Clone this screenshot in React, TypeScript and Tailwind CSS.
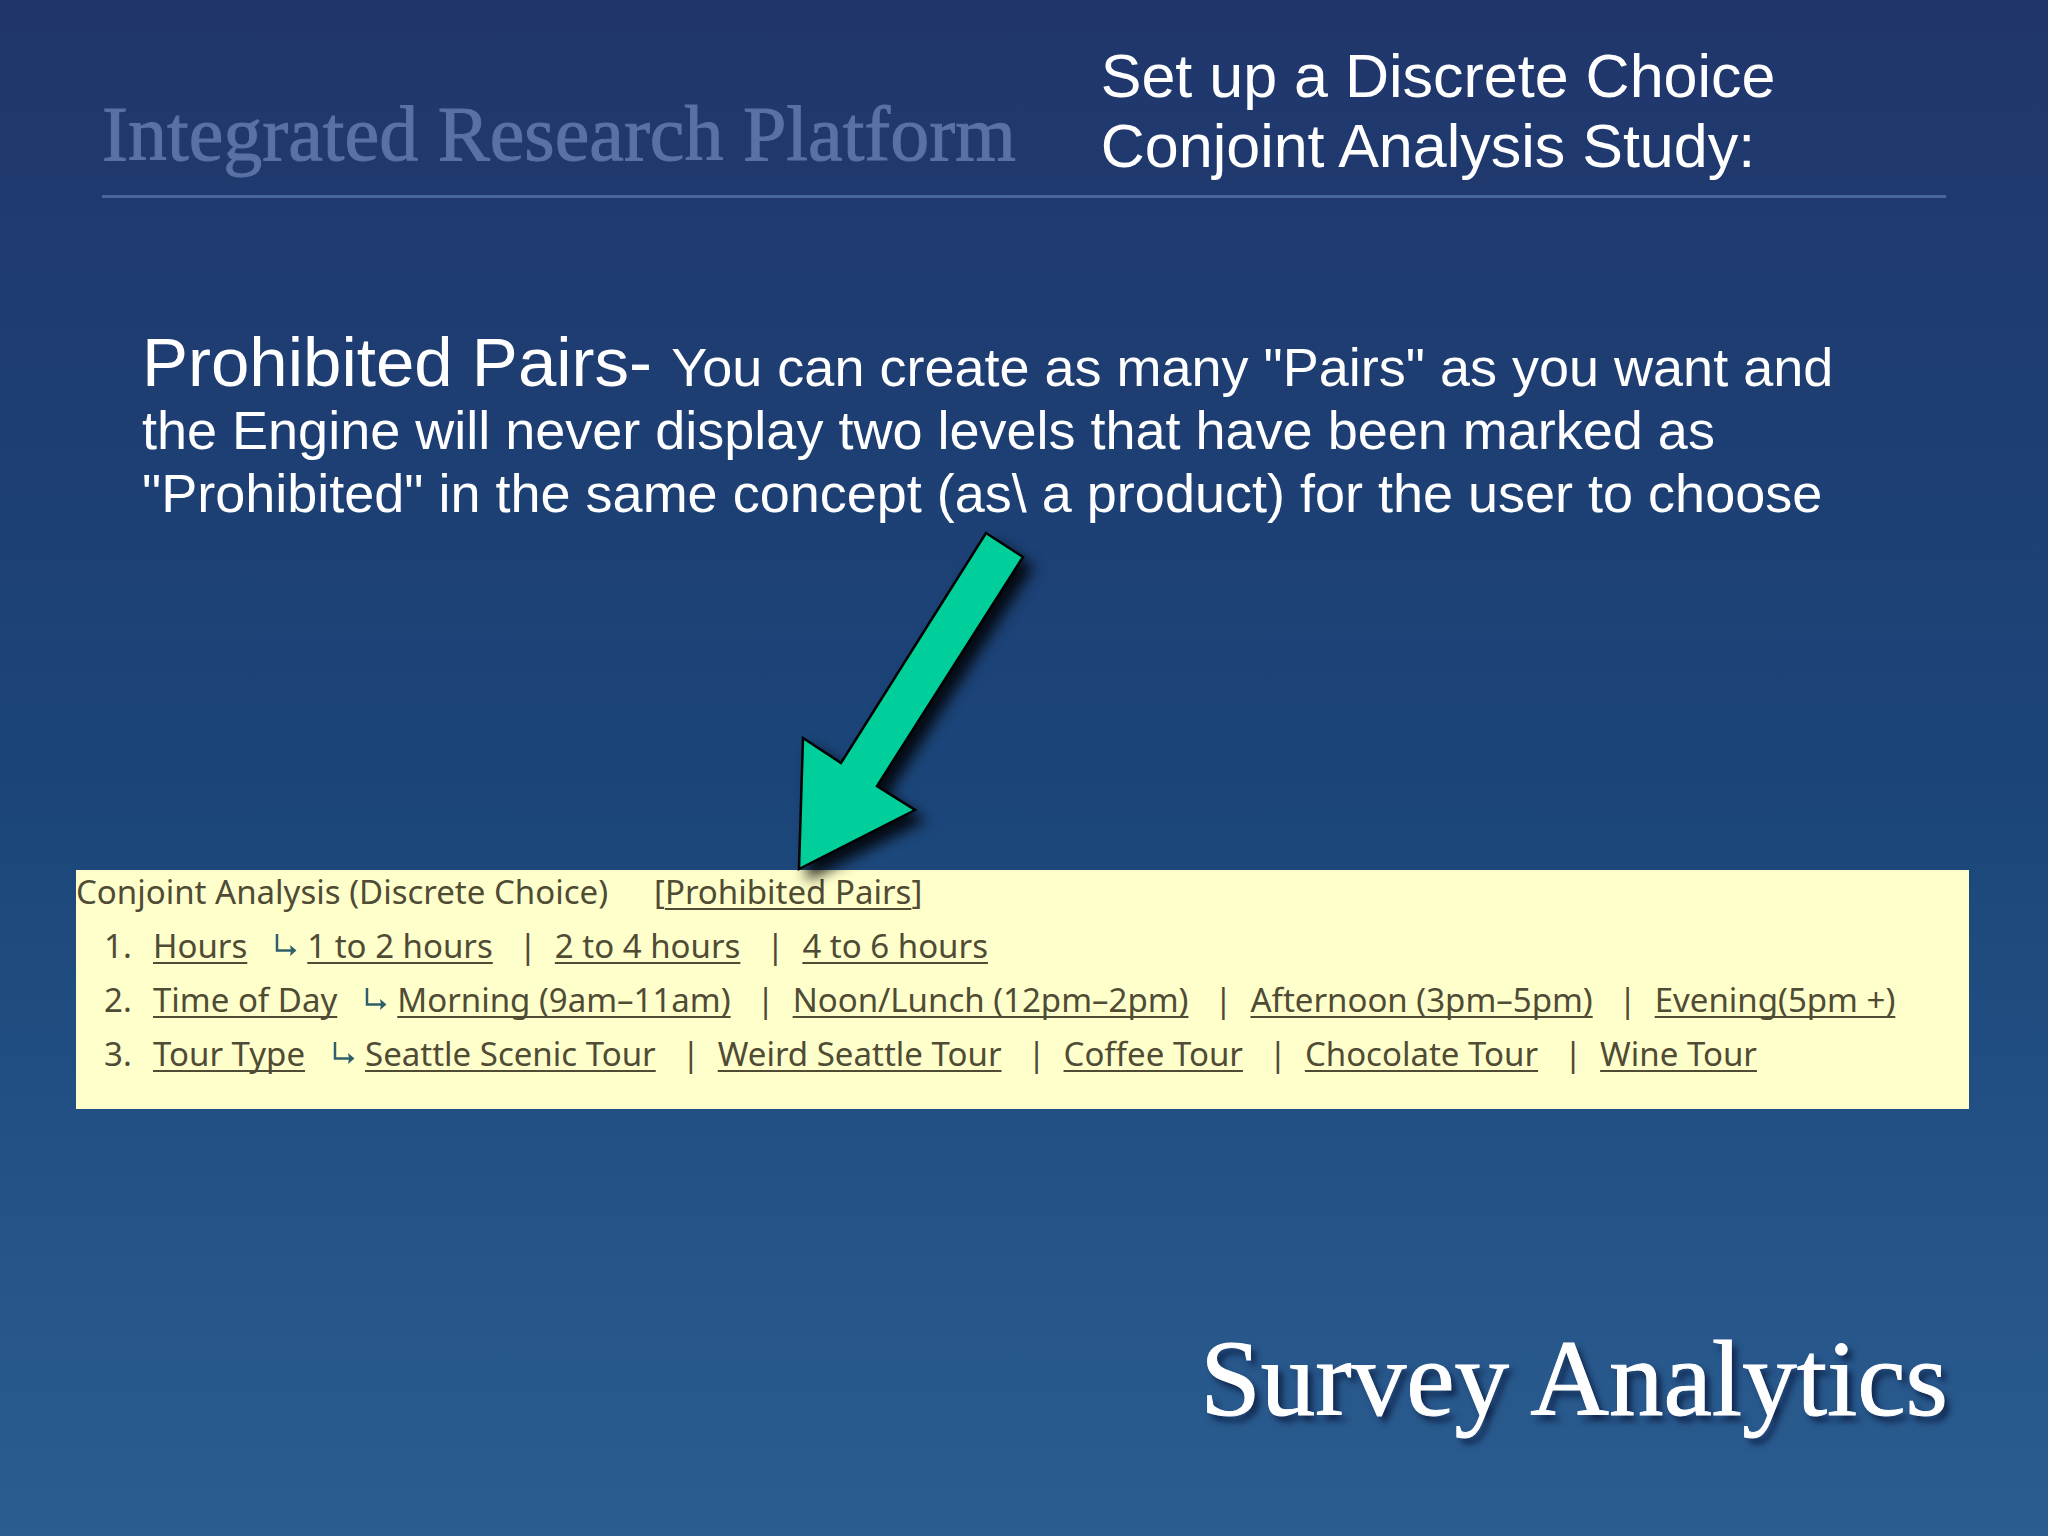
type Attribute = { name: string; levels: string[] };

const attributes: Attribute[] = [
  { name: "Hours", levels: ["1 to 2 hours", "2 to 4 hours", "4 to 6 hours"] },
  {
    name: "Time of Day",
    levels: ["Morning (9am–11am)", "Noon/Lunch (12pm–2pm)", "Afternoon (3pm–5pm)", "Evening(5pm +)"],
  },
  {
    name: "Tour Type",
    levels: ["Seattle Scenic Tour", "Weird Seattle Tour", "Coffee Tour", "Chocolate Tour", "Wine Tour"],
  },
];

const linkClass = "underline decoration-2 underline-offset-[4px] [text-decoration-skip-ink:none]";

function BranchIcon() {
  return (
    <svg width="22" height="24" viewBox="0 0 22 24" fill="none" className="ml-[28px] mr-[10px] shrink-0" aria-hidden="true">
      <path d="M2 0V16.5H17" stroke="#2f5f6b" strokeWidth="2.5" />
      <path d="M15 11L21.5 16.5L15 22L16 16.5Z" fill="#2f5f6b" />
    </svg>
  );
}

function PointerArrow() {
  return (
    <svg
      width="240"
      height="345"
      viewBox="795 525 240 345"
      className="relative z-10 ml-[795px] overflow-visible drop-shadow-[9px_10px_7px_rgba(0,0,0,0.85)]"
      aria-hidden="true"
    >
      <path
        d="M986 533L1023 557L877 786L915 810L799 869L803 738L841 763Z"
        fill="#00cf9b"
        stroke="#000"
        strokeWidth="2.5"
      />
    </svg>
  );
}

function AttributeRow({ index, attribute }: { index: number; attribute: Attribute }) {
  return (
    <li className="flex items-center">
      <span className="w-[49px] shrink-0">{index}.</span>
      <a href="#" className={linkClass}>{attribute.name}</a>
      <BranchIcon />
      {attribute.levels.map((level, i) => (
        <span key={level} className="flex">
          {i > 0 && <span className="w-[62px] pl-2 text-center">|</span>}
          <a href="#" className={linkClass}>{level}</a>
        </span>
      ))}
    </li>
  );
}

export default function App() {
  return (
    <div className="flex min-h-screen flex-col bg-linear-to-b from-[#20366b] via-[#1b4579] to-[#2b5d91] font-['Liberation_Sans',Arial,sans-serif] text-white">
      <header className="mx-[102px] grid grid-cols-[54fr_46fr] items-end border-b-[3px] border-[#48679e] pt-[41px] pb-[14px]">
        <p className="font-['Liberation_Serif',serif] text-[78px] leading-[94px] whitespace-nowrap text-[#5872a6] [-webkit-text-stroke:1px_#5872a6]">
          Integrated Research Platform
        </p>
        <h1 className="pl-[3px] text-[61px] leading-[70px] whitespace-nowrap">
          Set up a Discrete Choice
          <br />
          Conjoint Analysis Study:
        </h1>
      </header>

      <main>
        <p className="mt-[133px] ml-[142px] text-[54px] leading-[63px] whitespace-nowrap">
          <span className="text-[69px]">Prohibited Pairs- </span>
          You can create as many "Pairs" as you want and
          <br />
          the Engine will never display two levels that have been marked as
          <br />
          "Prohibited" in the same concept (as\ a product) for the user to choose
        </p>

        <PointerArrow />

        <section className="mr-[79px] ml-[76px] bg-[#ffffcc] pt-[2px] pb-[28px] font-['Noto_Sans',sans-serif] text-[33px] leading-[54px] whitespace-nowrap text-[#4f4b34]">
          <div className="flex gap-[46px] leading-[40px]">
            <h2>Conjoint Analysis (Discrete Choice)</h2>
            <span>
              [<a href="#" className={linkClass}>Prohibited Pairs</a>]
            </span>
          </div>
          <ol className="mt-[7px] pl-[28px]">
            {attributes.map((attribute, i) => (
              <AttributeRow key={attribute.name} index={i + 1} attribute={attribute} />
            ))}
          </ol>
        </section>
      </main>

      <footer className="mt-auto pr-[100px] pb-[98px] text-right font-['Liberation_Serif',serif] text-[109px] leading-[118px] [-webkit-text-stroke:1px_white] [text-shadow:5px_6px_6px_rgba(10,25,60,0.8)]">
        Survey Analytics
      </footer>
    </div>
  );
}
